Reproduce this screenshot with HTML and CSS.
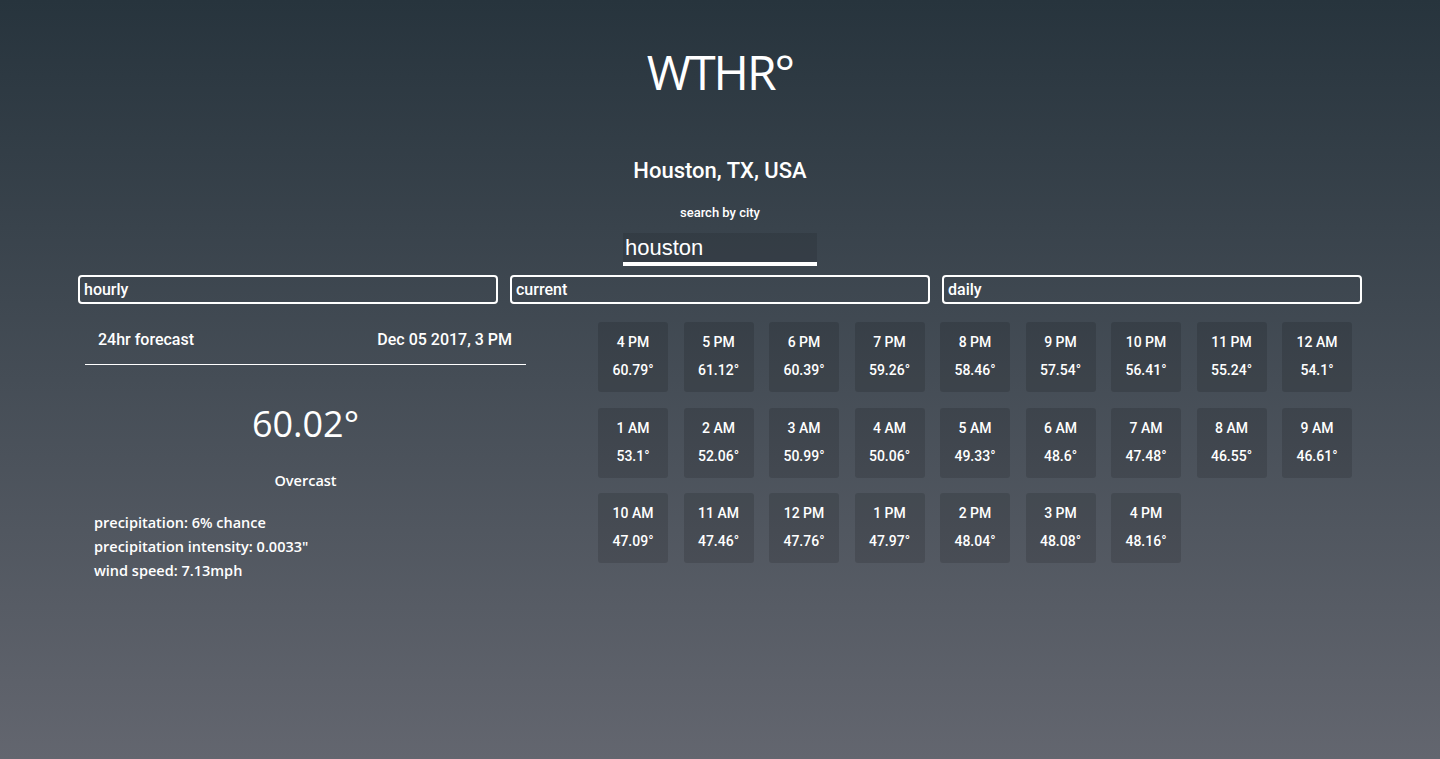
FILE: index.html
```html
<!DOCTYPE html>
<html lang="en">
<head>
<meta charset="utf-8">
<title>WTHR°</title>
<link rel="stylesheet" href="styles.css">
</head>
<body>
<div class="page">
  <h1 class="logo">WTHR°</h1>
  <h2 class="location">Houston, TX, USA</h2>
  <div class="search-label">search by city</div>
  <div class="search-wrap"><input class="search" type="text" value="houston"></div>
  <div class="tabs">
    <button class="tab">hourly</button>
    <button class="tab">current</button>
    <button class="tab">daily</button>
  </div>
  <div class="main">
    <section class="current">
      <div class="current-head">
        <span>24hr forecast</span>
        <span>Dec 05 2017, 3 PM</span>
      </div>
      <div class="current-temp">60.02°</div>
      <div class="current-summary">Overcast</div>
      <ul class="details">
        <li>precipitation: 6% chance</li>
        <li>precipitation intensity: 0.0033"</li>
        <li>wind speed: 7.13mph</li>
      </ul>
    </section>
    <section class="hours">
      <div class="tile"><div>4 PM</div><div>60.79°</div></div>
      <div class="tile"><div>5 PM</div><div>61.12°</div></div>
      <div class="tile"><div>6 PM</div><div>60.39°</div></div>
      <div class="tile"><div>7 PM</div><div>59.26°</div></div>
      <div class="tile"><div>8 PM</div><div>58.46°</div></div>
      <div class="tile"><div>9 PM</div><div>57.54°</div></div>
      <div class="tile"><div>10 PM</div><div>56.41°</div></div>
      <div class="tile"><div>11 PM</div><div>55.24°</div></div>
      <div class="tile"><div>12 AM</div><div>54.1°</div></div>
      <div class="tile"><div>1 AM</div><div>53.1°</div></div>
      <div class="tile"><div>2 AM</div><div>52.06°</div></div>
      <div class="tile"><div>3 AM</div><div>50.99°</div></div>
      <div class="tile"><div>4 AM</div><div>50.06°</div></div>
      <div class="tile"><div>5 AM</div><div>49.33°</div></div>
      <div class="tile"><div>6 AM</div><div>48.6°</div></div>
      <div class="tile"><div>7 AM</div><div>47.48°</div></div>
      <div class="tile"><div>8 AM</div><div>46.55°</div></div>
      <div class="tile"><div>9 AM</div><div>46.61°</div></div>
      <div class="tile"><div>10 AM</div><div>47.09°</div></div>
      <div class="tile"><div>11 AM</div><div>47.46°</div></div>
      <div class="tile"><div>12 PM</div><div>47.76°</div></div>
      <div class="tile"><div>1 PM</div><div>47.97°</div></div>
      <div class="tile"><div>2 PM</div><div>48.04°</div></div>
      <div class="tile"><div>3 PM</div><div>48.08°</div></div>
      <div class="tile"><div>4 PM</div><div>48.16°</div></div>
    </section>
  </div>
</div>
</body>
</html>
```

FILE: styles.css
```css
html, body {
  margin: 0;
  padding: 0;
  height: 100%;
}
body {
  background: linear-gradient(to bottom, #27343d 0%, #63666f 100%);
  color: #ffffff;
  font-family: Roboto, "Liberation Sans", sans-serif;
  min-height: 759px;
}
.page {
  display: flex;
  flex-direction: column;
  align-items: center;
}
.logo {
  margin: 40px 0 0;
  font-family: "Open Sans", sans-serif;
  font-weight: 400;
  font-size: 48px;
  line-height: 64px;
  letter-spacing: -2px;
}
.location {
  margin: 52px 0 0;
  font-size: 22px;
  font-weight: 500;
  line-height: 30px;
}
.search-label {
  margin-top: 19px;
  font-size: 13px;
  font-weight: 500;
  line-height: 16px;
}
.search-wrap {
  margin-top: 12px;
}
.search {
  display: block;
  box-sizing: border-box;
  width: 194px;
  height: 33px;
  margin: 0;
  padding: 0 2px;
  border: 0;
  border-bottom: 4px solid #ffffff;
  background: rgba(0, 0, 0, 0.1);
  color: #ffffff;
  font-family: "Liberation Sans", Arial, sans-serif;
  font-size: 22px;
  outline: none;
}
.tabs {
  margin-top: 9px;
  width: 1284px;
  display: grid;
  grid-template-columns: repeat(3, 1fr);
  gap: 12px;
}
.tab {
  box-sizing: border-box;
  height: 29px;
  margin: 0;
  padding: 0 4px;
  border: 2px solid #ffffff;
  border-radius: 4px;
  background: transparent;
  color: #ffffff;
  font-family: Roboto, sans-serif;
  font-size: 16px;
  font-weight: 500;
  text-align: left;
}
.main {
  margin-top: 18px;
  width: 1284px;
  display: flex;
  align-items: flex-start;
}
.current {
  margin-left: 7px;
  width: 441px;
  flex: none;
}
.current-head {
  display: flex;
  justify-content: space-between;
  padding: 8px 14px 14px 13px;
  border-bottom: 1px solid #ffffff;
  font-size: 16px;
  font-weight: 500;
  line-height: 20px;
}
.current-temp {
  margin-top: 35px;
  text-align: center;
  font-family: "Open Sans", sans-serif;
  font-size: 36px;
  line-height: 48px;
}
.current-summary {
  margin-top: 23px;
  text-align: center;
  font-family: "Open Sans", sans-serif;
  font-size: 14.5px;
  font-weight: 600;
  line-height: 20px;
}
.details {
  list-style: none;
  margin: 20px 0 0;
  padding: 0 0 0 9px;
  font-family: "Open Sans", sans-serif;
  font-size: 14.5px;
  font-weight: 600;
  line-height: 24px;
}
.hours {
  margin-left: 72px;
  display: grid;
  grid-template-columns: repeat(9, 70px);
  column-gap: 15.5px;
  row-gap: 15.5px;
}
.tile {
  box-sizing: border-box;
  height: 70px;
  padding-top: 10px;
  border-radius: 3px;
  background: rgba(0, 0, 0, 0.13);
  display: flex;
  flex-direction: column;
  align-items: center;
  gap: 8px;
  font-size: 14px;
  font-weight: 500;
  line-height: 20px;
}
```
